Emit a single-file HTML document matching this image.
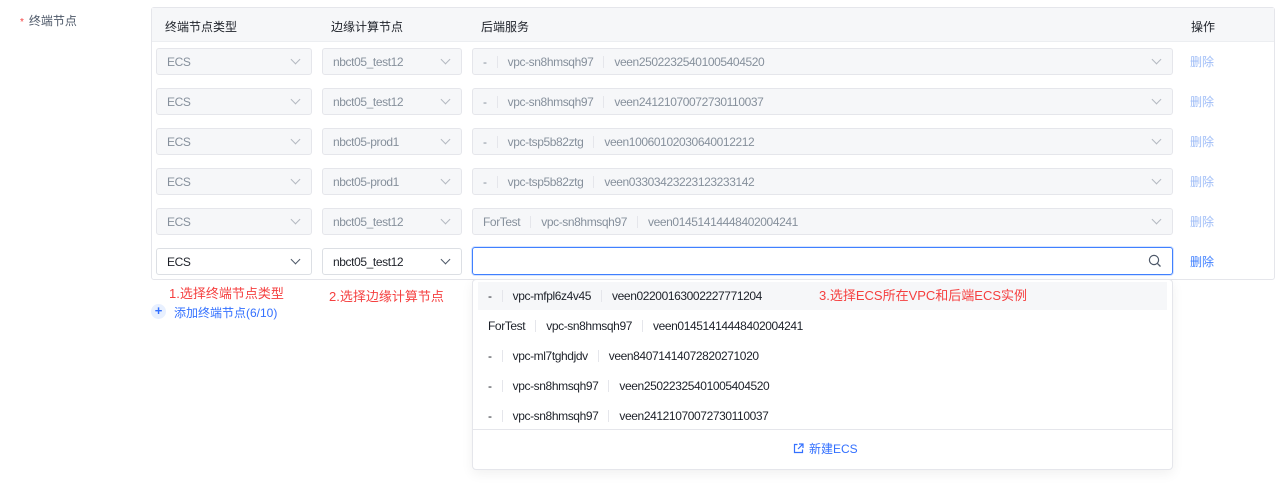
<!DOCTYPE html>
<html><head><meta charset="utf-8"><style>
*{box-sizing:border-box;margin:0;padding:0}
body{width:1280px;height:483px;background:#fff;font-family:"Liberation Sans","Noto Sans CJK SC",sans-serif;font-size:12px;color:#1d2129;position:relative;overflow:hidden}
.abs{position:absolute}
.lbl{left:20px;top:12px;color:#4e5969}
.lbl b{color:#f53f3f;font-weight:normal;margin-right:5px;font-size:10px}
.tbl{left:151px;top:7px;width:1124px;height:273px;border:1px solid #e5e6eb;border-radius:3px}
.hd{left:0;top:0;width:1122px;height:34px;background:#f6f7f9;border-bottom:1px solid #eceef1}
.hd span{position:absolute;top:10px;color:#1d2129}
.in{position:absolute;height:27px;border:1px solid #e5e6eb;border-radius:3px;background:#f6f7f9;color:#86909c;line-height:26px;padding-left:10px;white-space:nowrap;font-size:12px;letter-spacing:-0.4px}
.in.on{background:#fff;color:#1d2129;border-color:#dcdfe4}
.ch{position:absolute;right:12px;top:7px;width:7px;height:7px;border-right:1px solid #b4b9c1;border-bottom:1px solid #b4b9c1;transform:rotate(45deg)}
.on .ch{border-color:#4e5969}
.sep{display:inline-block;width:1px;height:12px;background:#e5e6eb;vertical-align:-2px;margin:0 10px}
.del{position:absolute;color:#9fbdf7}
.red{color:#f53f3f;font-size:13px;letter-spacing:0}
.dd{left:472px;top:279px;width:701px;height:191px;border:1px solid #e5e6eb;border-radius:4px;background:#fff;box-shadow:0 4px 12px rgba(0,0,0,.06)}
.it{position:absolute;left:5px;width:689px;height:28px;line-height:28px;padding-left:10px;color:#1d2129;font-size:12px;letter-spacing:-0.4px}
</style></head><body>
<div class="abs lbl"><b>*</b>终端节点</div>
<div class="abs tbl">
 <div class="abs hd"><span style="left:13px">终端节点类型</span><span style="left:179px">边缘计算节点</span><span style="left:329px">后端服务</span><span style="left:1039px">操作</span></div>
</div>
<div class="in" style="left:156px;top:48px;width:156px">ECS<i class="ch"></i></div>
<div class="in" style="left:322px;top:48px;width:140px">nbct05_test12<i class="ch"></i></div>
<div class="in" style="left:472px;top:48px;width:701px">-<span class="sep"></span>vpc-sn8hmsqh97<span class="sep"></span>veen25022325401005404520<i class="ch"></i></div>
<div class="del" style="left:1190px;top:53px">删除</div>

<div class="in" style="left:156px;top:88px;width:156px">ECS<i class="ch"></i></div>
<div class="in" style="left:322px;top:88px;width:140px">nbct05_test12<i class="ch"></i></div>
<div class="in" style="left:472px;top:88px;width:701px">-<span class="sep"></span>vpc-sn8hmsqh97<span class="sep"></span>veen24121070072730110037<i class="ch"></i></div>
<div class="del" style="left:1190px;top:93px">删除</div>

<div class="in" style="left:156px;top:128px;width:156px">ECS<i class="ch"></i></div>
<div class="in" style="left:322px;top:128px;width:140px">nbct05-prod1<i class="ch"></i></div>
<div class="in" style="left:472px;top:128px;width:701px">-<span class="sep"></span>vpc-tsp5b82ztg<span class="sep"></span>veen10060102030640012212<i class="ch"></i></div>
<div class="del" style="left:1190px;top:133px">删除</div>

<div class="in" style="left:156px;top:168px;width:156px">ECS<i class="ch"></i></div>
<div class="in" style="left:322px;top:168px;width:140px">nbct05-prod1<i class="ch"></i></div>
<div class="in" style="left:472px;top:168px;width:701px">-<span class="sep"></span>vpc-tsp5b82ztg<span class="sep"></span>veen03303423223123233142<i class="ch"></i></div>
<div class="del" style="left:1190px;top:173px">删除</div>

<div class="in" style="left:156px;top:208px;width:156px">ECS<i class="ch"></i></div>
<div class="in" style="left:322px;top:208px;width:140px">nbct05_test12<i class="ch"></i></div>
<div class="in" style="left:472px;top:208px;width:701px">ForTest<span class="sep"></span>vpc-sn8hmsqh97<span class="sep"></span>veen01451414448402004241<i class="ch"></i></div>
<div class="del" style="left:1190px;top:213px">删除</div>

<div class="in on" style="left:156px;top:248px;width:156px">ECS<i class="ch"></i></div>
<div class="in on" style="left:322px;top:248px;width:140px">nbct05_test12<i class="ch"></i></div>
<div class="in on" style="left:472px;top:247px;width:701px;height:28px;border:1.5px solid #4080ff;box-shadow:0 0 0 1px #d6e4ff">
<svg class="abs" style="right:10px;top:6px" width="14" height="14" viewBox="0 0 14 14"><circle cx="6" cy="6" r="4.6" fill="none" stroke="#4e5969" stroke-width="1.2"/><path d="M9.4 9.4 12.5 12.5" stroke="#4e5969" stroke-width="1.3"/></svg></div>
<div class="del" style="left:1190px;top:253px;color:#4080ff">删除</div>

<div class="abs red" style="left:169px;top:283px">1.选择终端节点类型</div>
<div class="abs red" style="left:329px;top:286px">2.选择边缘计算节点</div>
<div class="abs" style="left:151px;top:304px;width:15px;height:15px;border-radius:50%;background:#e8f0ff;color:#3370ff;text-align:center;line-height:14px;font-size:13px;font-weight:bold">+</div>
<div class="abs" style="left:174px;top:304px;color:#3370ff">添加终端节点(6/10)</div>

<div class="abs dd">
 <div class="it" style="top:2px;background:#f6f7f9">-<span class="sep"></span>vpc-mfpl6z4v45<span class="sep"></span>veen02200163002227771204<span class="red" style="position:absolute;left:341px;top:0">3.选择ECS所在VPC和后端ECS实例</span></div>
 <div class="it" style="top:32px">ForTest<span class="sep"></span>vpc-sn8hmsqh97<span class="sep"></span>veen01451414448402004241</div>
 <div class="it" style="top:62px">-<span class="sep"></span>vpc-ml7tghdjdv<span class="sep"></span>veen84071414072820271020</div>
 <div class="it" style="top:92px">-<span class="sep"></span>vpc-sn8hmsqh97<span class="sep"></span>veen25022325401005404520</div>
 <div class="it" style="top:122px">-<span class="sep"></span>vpc-sn8hmsqh97<span class="sep"></span>veen24121070072730110037</div>
 <div class="abs" style="left:0;top:149px;width:699px;height:1px;background:#e5e6eb"></div>
 <div class="abs" style="left:320px;top:160px;color:#3370ff"><svg width="11" height="11" viewBox="0 0 11 11" style="vertical-align:-1px;margin-right:5px"><path d="M4.5 1.5H1.5V9.5H9.5V6.5M6 1H10V5M10 1 5 6" fill="none" stroke="#3370ff" stroke-width="1.2"/></svg>新建ECS</div>
</div>
</body></html>
